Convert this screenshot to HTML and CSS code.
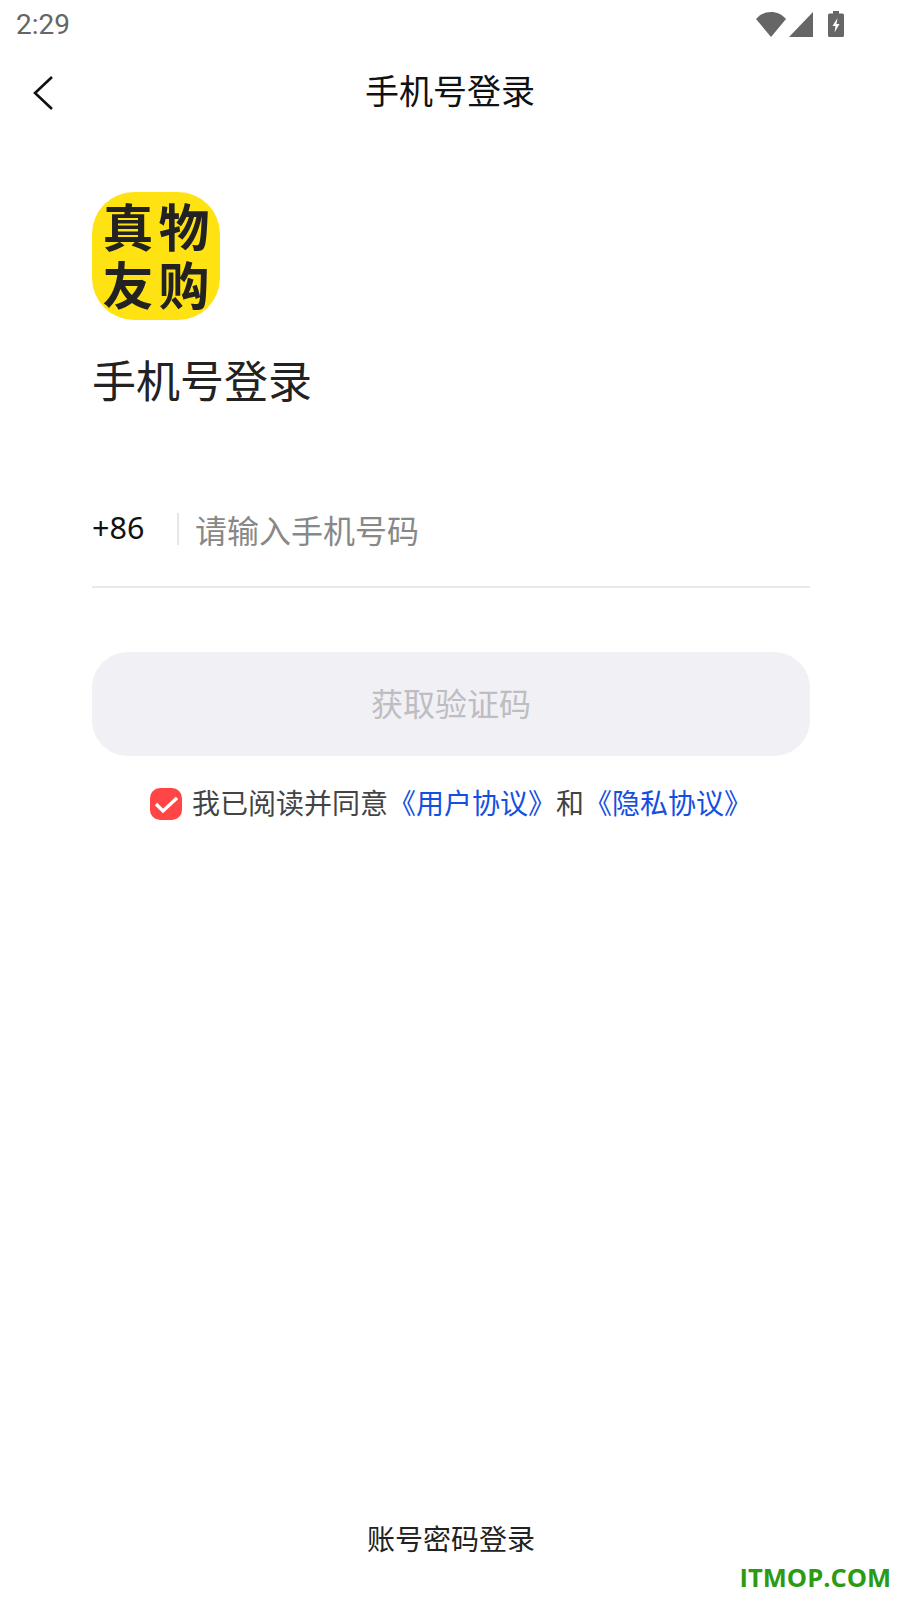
FILE: index.html
```html
<!DOCTYPE html>
<html lang="zh">
<head>
<meta charset="utf-8">
<title>手机号登录</title>
<link rel="stylesheet" href="styles.css">
</head>
<body>
<div class="screen">
  <div class="status">
    <span class="time">2:29</span>
    <div class="status-icons">
      <svg class="wifi" width="30" height="25" viewBox="0 0 30 25"><path d="M0 7C4 2.500 9 0 15 0s11 2.500 15 7L15 25z" fill="#666"/></svg>
      <svg class="signal" width="24" height="25" viewBox="0 0 24 25"><path d="M24 0v25H0z" fill="#666"/></svg>
      <svg class="battery" width="16" height="26" viewBox="0 0 16 26"><path d="M5 0h6v2.500h3.500q1.500 0 1.500 1.500v20.500q0 1.500-1.500 1.500h-13Q0 26 0 24.500V4q0-1.500 1.500-1.500H5z" fill="#666"/><path d="M9.500 7L4.500 15h3l-1 6.500 5-8.500h-3z" fill="#fff"/></svg>
    </div>
  </div>
  <header class="nav">
    <svg class="back" width="22" height="34" viewBox="0 0 22 34"><path d="M20 1L3 17l17 16" fill="none" stroke="#111" stroke-width="2.600"/></svg>
    <h1 class="nav-title">手机号登录</h1>
  </header>
  <main class="content">
    <div class="logo"><span>真物</span><span>友购</span></div>
    <h2 class="heading">手机号登录</h2>
    <div class="phone-row">
      <span class="code">+86</span>
      <span class="divider"></span>
      <span class="placeholder">请输入手机号码</span>
    </div>
    <div class="submit">获取验证码</div>
    <div class="agree">
      <svg class="check" width="32" height="32" viewBox="0 0 32 32"><rect width="32" height="32" rx="10" fill="#ff4545"/><path d="M6 16l7 7L27 10" fill="none" stroke="#fff" stroke-width="3.400"/></svg>
      <span class="agree-text">我已阅读并同意<a class="link">《用户协议》</a>和<a class="link">《隐私协议》</a></span>
    </div>
  </main>
  <footer class="foot">
    <span class="alt">账号密码登录</span>
    <span class="mark">ITMOP.COM</span>
  </footer>
</div>
</body>
</html>
```
FILE: styles.css
```css
* { box-sizing: border-box; margin: 0; padding: 0; }
html, body { background: #fff; }
body { font-family: "Noto Sans CJK SC", "Noto Sans", sans-serif; }
.screen { width: 900px; height: 1600px; display: flex; flex-direction: column; overflow: hidden; }
.status { height: 48px; padding: 0 56px 0 16px; display: flex; justify-content: space-between; align-items: center; }
.time { font-family: Roboto, sans-serif; font-size: 28px; font-weight: 400; color: #666; padding-top: 1px; }
.status-icons { display: flex; align-items: center; gap: 3px; }
.signal { margin-right: 12px; }
.nav { height: 92px; position: relative; display: flex; justify-content: center; align-items: center; padding-bottom: 8px; }
.back { position: absolute; left: 32px; top: 28px; }
.nav-title { font-size: 34px; font-weight: 400; color: #111; line-height: 1; }
.content { flex: 1; padding: 52px 90px 0 92px; display: flex; flex-direction: column; }
.logo { width: 128px; height: 128px; padding-bottom: 5px; border-radius: 42px; background: #ffe211; color: #222; display: flex; flex-direction: column; align-items: center; justify-content: center; font-size: 51px; font-weight: 700; line-height: 58px; letter-spacing: 5px; text-indent: 5px; }
.heading { margin-top: 27px; font-size: 44px; font-weight: 400; color: #222; line-height: 64px; }
.phone-row { margin-top: 71px; height: 106px; padding-bottom: 10px; border-bottom: 2px solid #e9e9ec; display: flex; align-items: center; }
.code { width: 85px; font-family: "Noto Sans", sans-serif; font-size: 30.500px; color: #111; position: relative; top: -2px; }
.divider { width: 2px; height: 32px; background: #e6e6e6; margin-right: 16px; }
.placeholder { font-size: 32px; color: #888; }
.submit { margin-top: 64px; height: 104px; padding-bottom: 4px; border-radius: 36px; background: #f0f0f5; color: #bdbdc2; font-size: 32px; display: flex; align-items: center; justify-content: center; }
.agree { margin-top: 32px; padding-left: 58px; display: flex; align-items: center; gap: 10px; font-size: 28px; color: #444; height: 32px; white-space: nowrap; }
.agree-text { margin-bottom: 4px; }
.check { flex: none; }
.link { color: #1450e0; }
.foot { height: 72px; position: relative; display: flex; justify-content: center; padding-left: 2px; }
.alt { font-size: 28px; color: #222; line-height: 40px; position: relative; top: -10px; }
.mark { position: absolute; right: 9px; bottom: 7px; font-family: "Open Sans", sans-serif; font-weight: 700; font-size: 25.500px; line-height: 32px; color: #2a9b12; }
```
